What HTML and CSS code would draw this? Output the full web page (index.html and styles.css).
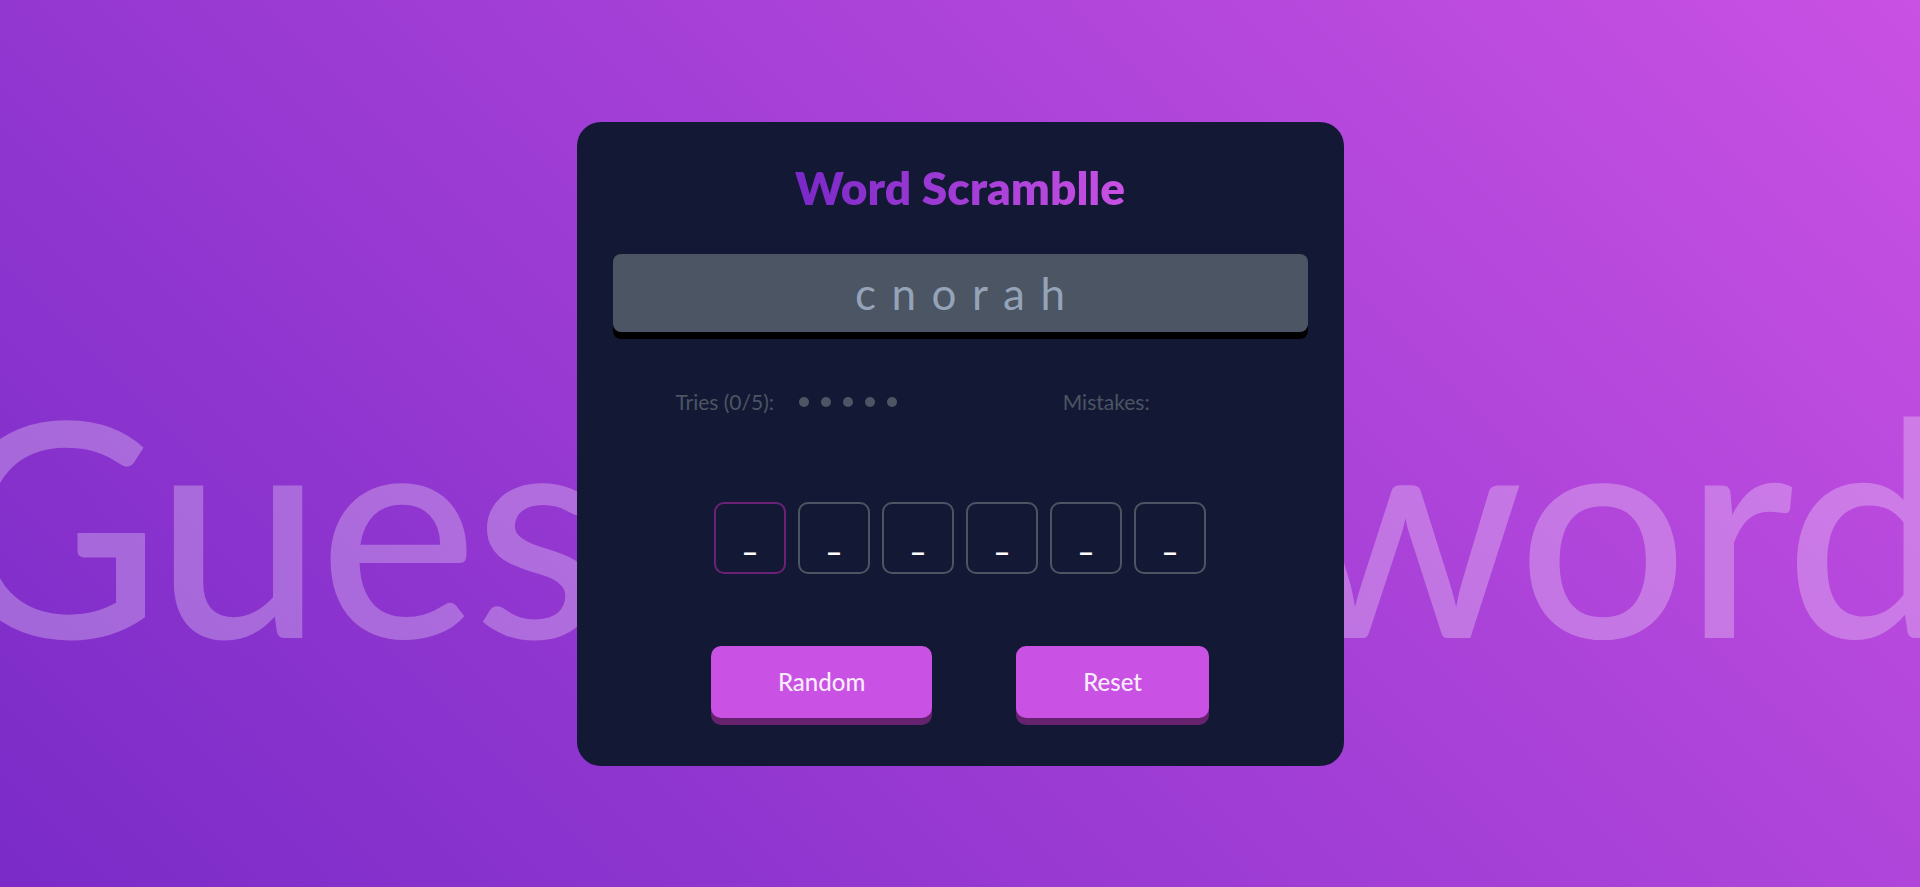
FILE: index.html
```html
<!DOCTYPE html>
<html lang="en">
<head>
<meta charset="utf-8">
<title>Word Scramblle</title>
<link rel="stylesheet" href="styles.css">
</head>
<body>
<div class="backdrop-text" aria-hidden="true">Guess the word</div>
<main class="card">
  <h1 class="title"><span>Word Scramblle</span></h1>
  <div class="scrambled">cnorah</div>
  <div class="status">
    <div class="status-group">
      <span class="status-label">Tries (0/5):</span>
      <span class="dots">
        <i class="dot"></i><i class="dot"></i><i class="dot"></i><i class="dot"></i><i class="dot"></i>
      </span>
    </div>
    <div class="status-group">
      <span class="status-label">Mistakes:</span>
      <span class="mistakes-list"></span>
    </div>
  </div>
  <div class="slots">
    <div class="slot active">_</div>
    <div class="slot">_</div>
    <div class="slot">_</div>
    <div class="slot">_</div>
    <div class="slot">_</div>
    <div class="slot">_</div>
  </div>
  <div class="actions">
    <button class="btn">Random</button>
    <button class="btn">Reset</button>
  </div>
</main>
</body>
</html>
```
FILE: styles.css
```css
* { box-sizing: border-box; }
html, body { margin: 0; padding: 0; }
body {
  height: 100vh;
  overflow: hidden;
  font-family: "Lato", "Noto Sans", sans-serif;
  background: linear-gradient(45deg, #7a2bc8 0%, #c951e3 100%);
  display: flex;
  align-items: center;
  justify-content: center;
  position: relative;
}
.backdrop-text {
  position: absolute;
  left: 50%;
  top: 372px;
  transform: translateX(calc(-50% - 14px));
  font-size: 300px;
  line-height: 1;
  font-weight: 500;
  letter-spacing: -4px;
  white-space: nowrap;
  color: rgba(255, 255, 255, 0.27);
  pointer-events: none;
}
.card {
  position: relative;
  width: 767px;
  height: 644px;
  background: #131935;
  border-radius: 24px;
  padding: 42px 36px 48px;
  display: flex;
  flex-direction: column;
}
.title {
  margin: 0;
  text-align: center;
  font-size: 46px;
  line-height: 48px;
  font-weight: 800;
}
.title span {
  background: linear-gradient(to right, #7a28c8, #c951e3);
  -webkit-background-clip: text;
  background-clip: text;
  color: transparent;
}
.scrambled {
  margin-top: 42px;
  height: 78px;
  background: #4b5563;
  border-radius: 8px;
  box-shadow: 0 7px 0 #000;
  color: #94a3b8;
  font-size: 44px;
  line-height: 78px;
  text-align: center;
  letter-spacing: 15.5px;
  padding-left: 15.5px;
}
.status {
  margin-top: 56px;
  height: 28px;
  display: grid;
  grid-template-columns: 1fr 1fr;
  color: #4b5563;
  font-size: 21px;
  line-height: 28px;
}
.status-group {
  display: flex;
  align-items: center;
  justify-content: center;
  gap: 25px;
}
.dots {
  display: flex;
  gap: 12px;
}
.dot {
  width: 10px;
  height: 10px;
  border-radius: 50%;
  background: #4b5563;
}
.mistakes-list { min-width: 30px; }
.slots {
  margin-top: 86px;
  display: flex;
  justify-content: center;
  gap: 12px;
}
.slot {
  width: 72px;
  height: 72px;
  border: 2px solid #4b5563;
  border-radius: 10px;
  display: flex;
  align-items: center;
  justify-content: center;
  color: #fff;
  font-size: 30px;
  font-weight: 700;
  line-height: 1;
}
.slot.active { border-color: #6b2176; }
.actions {
  margin-top: 72px;
  display: flex;
  justify-content: center;
  gap: 84px;
}
.btn {
  height: 72px;
  padding: 0 67px;
  border: 0;
  border-radius: 10px;
  background: #c951e3;
  box-shadow: 0 7px 0 #66226f;
  color: #f8ecfd;
  font-family: inherit;
  font-size: 24px;
  font-weight: 500;
}
```
